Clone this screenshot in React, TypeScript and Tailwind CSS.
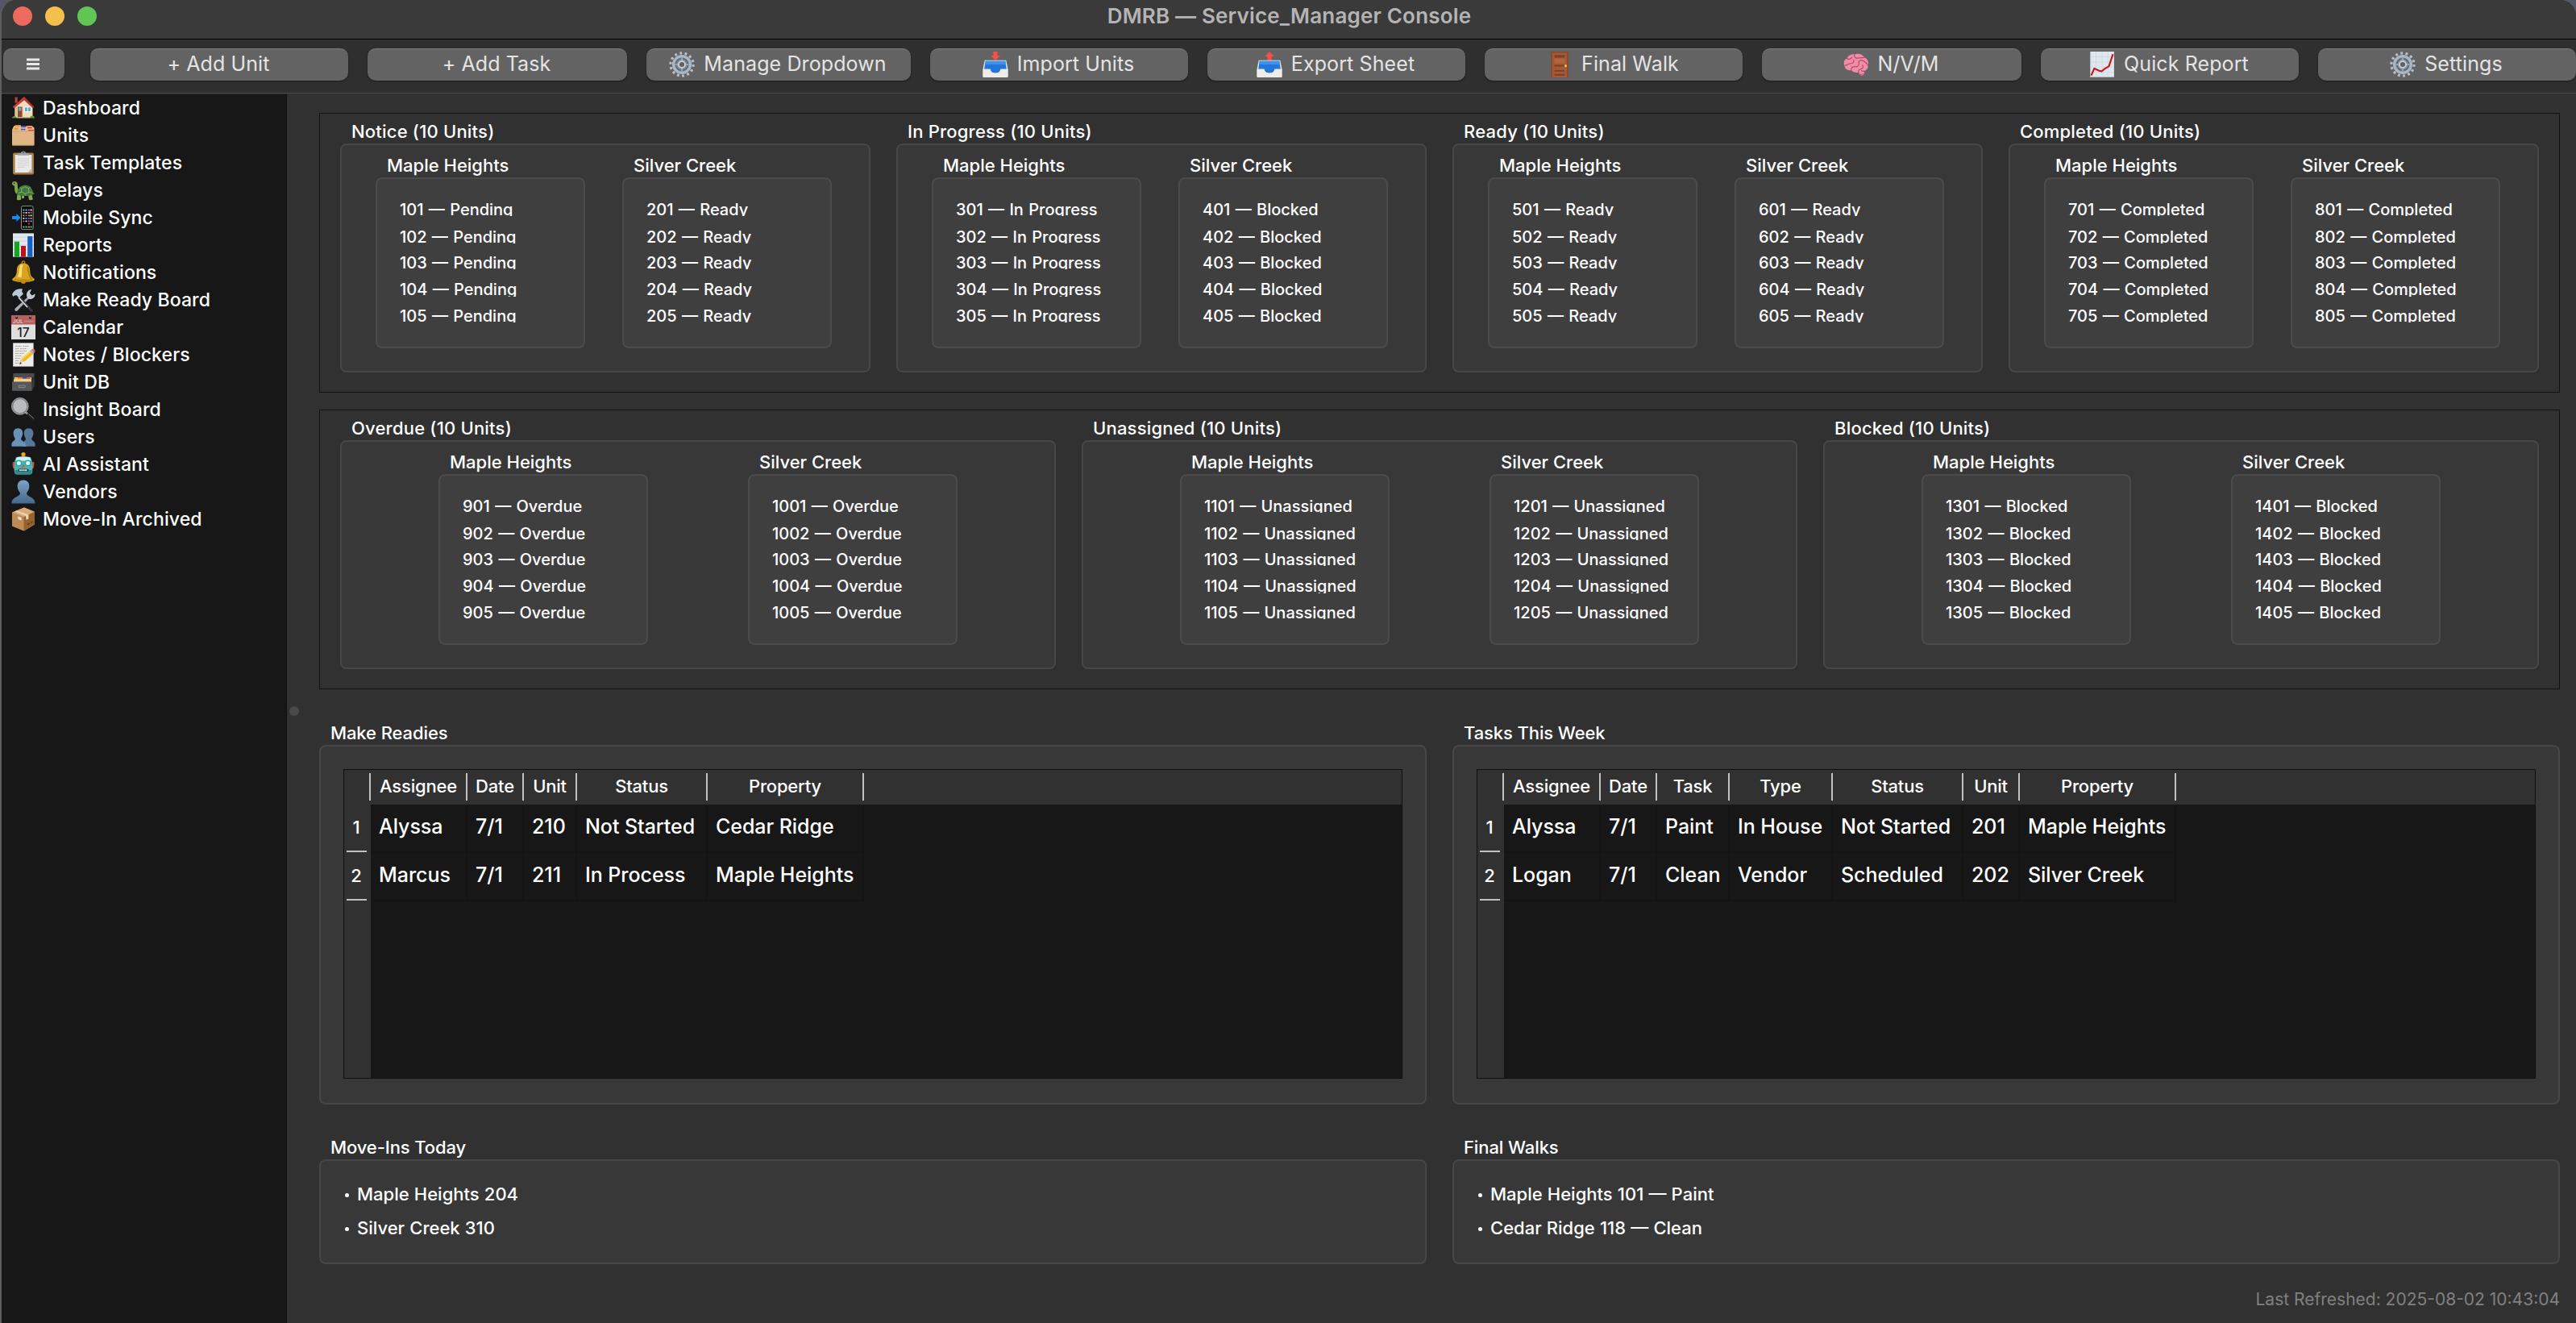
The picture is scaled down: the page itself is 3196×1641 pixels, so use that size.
import type { ReactNode } from "react";

/* ---------- icons (30 x 30 artboard) ---------- */

const art: Record<string, ReactNode> = {
  house: (
    <>
      <path d="M4.5 1.5h3.2v7H4.5z" fill="#b5423a" />
      <path d="M4.5 13 16 4l10.5 9v13.6h-22z" fill="#f0dcb8" />
      <path d="M4.5 13h3v13.6h-3z" fill="#d9bf94" />
      <path d="M16 .8 1.6 13.6l1.8 1.6L16 5.2l10.8 10 1.6-1.6z" fill="#b3312a" />
      <path d="M16 2.6 3 14" stroke="#d85a4c" strokeWidth="1" />
      <path d="M8 13.5h5.6v12.8H8z" fill="#8a4a2c" />
      <path d="M9 14.6h3.4v4H9z" fill="#6fa6c8" />
      <path d="M16 13.5h8.6v6.2H16z" fill="#fff" />
      <path d="M16.8 14.2h3v4.8h-3zM20.8 14.2h3v4.8h-3z" fill="#5fa5dc" />
      <path d="M1 27.6c0-3 4-4 5.6-.4zM23 27.6c0-4 6-4 6 0z" fill="#5f9a34" />
      <path d="M6.5 26h17v1.6h-17z" fill="#c9b48d" />
    </>
  ),
  files: (
    <>
      <path d="M3 3.5 6 2h5l1.5 1.5H19L20.5 3h5l3 2.5V10H1V8z" fill="#e2bd8b" />
      <path d="M5 2h5.5v1.8H5zM3.5 5.8h5v1.6h-5z" fill="#f08a24" />
      <path d="M12 3.4h6v1.6h-6zM12 6.8h5.5v1.5H12z" fill="#3a4fe0" />
      <path d="M20 4.6h5.5v1.7H20zM21 8h7v1.6h-7z" fill="#e8302c" />
      <rect x="1" y="9.6" width="27.6" height="18" rx="1" fill="#dfb684" />
      <path d="M1 9.8h27.6" stroke="#c99f6c" strokeWidth=".8" />
      <path d="M1.4 27.2h26.8" stroke="#b58a58" strokeWidth=".8" />
    </>
  ),
  clipboard: (
    <>
      <rect x="2" y="2.4" width="26" height="27" rx="2" fill="#a97c43" />
      <rect x="4.6" y="5" width="20.8" height="22" fill="#e9e9e9" />
      <path d="m25.4 22-5 5h5z" fill="#b9b9b9" />
      <path d="M8 10h14M8 12.6h14M8 15.2h14M8 17.8h14M8 20.4h9" stroke="#cfcfcf" strokeWidth="1" />
      <path d="M8.6 3h3.2c.4-3.4 6-3.4 6.4 0h3.2l1 2.8H7.6z" fill="#9aa2a8" />
      <circle cx="15" cy="2.2" r="1" fill="#4b4f52" />
    </>
  ),
  turtle: (
    <>
      <path d="M1 7c-.6-3.4 5.6-4.4 6.6-.4.6 3.4 0 6.4 1.4 9.4l-2.4 3.4C3.2 17.4 4.6 12 3.8 9.6 2.6 9.4 1.2 8.6 1 7z" fill="#7fa648" />
      <path d="M7.4 20h4.2l.6 6.6c-1.4 1-4.4 1-5.4 0zM21 20h4.4l1.4 6.2c-1.6 1.2-3.8 1.2-5 .4zM13 21h3v4h-3z" fill="#86aa4b" />
      <path d="m26 17 3 2.4-4 .6z" fill="#7fa648" />
      <path d="M7 20c.4-7 4.600-11.600 10.200-11.600S27.400 13 27.200 20.400c-6 2.200-14 2.400-20.200-.4z" fill="#3f7a3c" />
      <path d="m13 12.600 4-2 4.400 2 .6 4.400-4.600 2.400-4.800-2.200zM8.600 18.600l4-1.400M22 17l4.400 1.400M17.400 19.400v2M21.400 12.600l2.400-1.200M13 12.600l-2.200-1" stroke="#88b26a" strokeWidth=".9" fill="none" />
      <circle cx="3.600" cy="6.400" r=".8" fill="#222" />
    </>
  ),
  phone: (
    <>
      <rect x="12.500" y=".6" width="14.600" height="29" rx="1.800" fill="#060606" stroke="#8e8e8e" strokeWidth="1" />
      <path d="M14.400 4.600h2v1.800h-2zM21 11.400h2v1.800h-2zM14.400 25.600h2v2h-2zM23.600 25.600h2v2h-2z" fill="#5bd162" />
      <path d="M17.600 4.600h2v1.800h-2zM14.400 8h2v1.800h-2zM17.600 15h2v1.800h-2zM17.600 25.600h2v2h-2zM23.600 18.400h2v1.800h-2z" fill="#58b7ec" />
      <path d="M20.800 4.600h2v1.800h-2zM17.600 11.400h2v1.800h-2zM14.400 18.400h2v1.800h-2zM20.800 21.800h2v1.800h-2z" fill="#d94c7e" />
      <path d="M23.600 4.600h2v1.800h-2zM17.600 8h2v1.800h-2zM23.600 11.400h2v1.800h-2zM14.400 15h2v1.800h-2zM17.600 18.400h2v1.800h-2z" fill="#e9e9e9" />
      <path d="M20.800 8h2v1.800h-2zM14.400 11.400h2v1.800h-2zM23.600 15h2v1.800h-2zM20.800 25.600h2v2h-2z" fill="#f0a23a" />
      <path d="M20.800 15h2v1.800h-2zM23.600 8h2v1.800h-2zM20.800 18.400h2v1.800h-2z" fill="#c24be0" />
      <path d="M1 13h5.400v-3l5.200 5-5.200 5v-3H1z" fill="#1d86ef" />
    </>
  ),
  bars: (
    <>
      <rect x="2" y=".4" width="26" height="29.200" fill="#dfe7f0" />
      <path d="M2 5h26M2 10h26M2 15h26M2 20h26M2 25h26" stroke="#c2cdd9" strokeWidth=".6" />
      <path d="M3.800 10.600h6.200v19H3.800z" fill="#14a51c" />
      <path d="M12 16h6v13.600h-6z" fill="#bf1218" />
      <path d="M20.200 4h6.200v25.600h-6.200z" fill="#175fc0" />
    </>
  ),
  bell: (
    <>
      <circle cx="15" cy="2.800" r="1.900" fill="none" stroke="#c08a1a" strokeWidth="1.200" />
      <path d="M15 3.400c6 0 8 4 8.200 9.600.2 5 2 7.600 5 9.600.8.6.8 1.800 0 2.400-7 2.600-19.400 2.600-26.400 0-.8-.6-.8-1.800 0-2.400 3-2 4.800-4.600 5-9.600C7 7.400 9 3.400 15 3.400z" fill="#d9a31c" />
      <path d="M11.600 5.600c-2 3-1.400 9.600-3.600 14.600 1.800.6 3 .8 4.600.8.800-5 .2-11 1.800-16z" fill="#f8e07a" />
      <path d="M20 8c1.600 5 1 10 5 15" stroke="#a87410" strokeWidth="1.400" fill="none" />
      <path d="M4 23.400c6 2 16 2 22 0" stroke="#9a6a10" strokeWidth="1" fill="none" />
      <circle cx="15" cy="26" r="3" fill="#c48614" />
    </>
  ),
  tools: (
    <>
      <path d="m22 10 1.600 1.600L7.400 28.600c-1.400 1.200-4-.8-2.800-2.800z" fill="#a9adb3" />
      <path d="M10.500 10 26.600 27.400c1 1.400-1 3-2.200 2L7.600 12.400z" fill="#39393b" />
      <path d="M19.600 11.600c-2-4.400 1-9.200 5.400-9.600l-2 4.600 2.600 3 4-2c.4 4.600-4.600 7.800-8.400 6z" fill="#c6cdd6" />
      <path d="M1 8.600C2.800 3.200 8 .4 14 1.600L13 4.400l2 3-5.400 5-3-3.200-2.800.2-1 1.600z" fill="#bcc8d6" />
      <path d="M9.400 12.200 20 24" stroke="#d9dde2" strokeWidth="1.600" />
    </>
  ),
  calendar: (
    <>
      <rect width="30" height="30" fill="#dedede" />
      <rect width="30" height="11.500" fill="#b4605f" />
      <circle cx="6.600" cy="3" r="1.500" fill="#2b1414" />
      <circle cx="23.400" cy="3" r="1.500" fill="#2b1414" />
      <path d="M6.600 0v3M23.400 0v3" stroke="#9a9a9a" strokeWidth=".8" />
      <text x="1.800" y="10.200" fontSize="6.800" fontWeight="700" fill="#e2b9b8">JUL</text>
      <path d="M16 7.600h12" stroke="#c07a78" strokeWidth="2.400" />
      <text x="15" y="26.600" fontSize="15.500" textAnchor="middle" fill="#1b1b1b">17</text>
    </>
  ),
  memo: (
    <>
      <rect x="2.200" y=".4" width="25.400" height="29.200" fill="#ececea" />
      <path d="M5 4.400h8m1.500 0h7M5 7.400h5m1.200 0h8M5 10.400h9m1 0h4M5 13.400h4m1 0h6M5 16.400h8M5 19.400h6M5 22.400h4M5 25.400h4" stroke="#8f8f8f" strokeWidth=".9" strokeDasharray="1.800 .7" />
      <path d="m10.400 24.800 1.800-5 11-9.600 3.600 4-11 9.600z" fill="#f2b81f" />
      <path d="m12.200 19.800 11-9.600 1.300 1.400-11 9.700z" fill="#fbd95c" />
      <path d="m10.400 24.800 1.800-5 3.600 4z" fill="#e8cfa4" />
      <path d="m10.200 27 .8-3 2 2z" fill="#3a3a3a" />
      <path d="m23.200 10.200 1.600-1.400 3.600 4-1.600 1.400z" fill="#9fb2c0" />
      <path d="m24.800 8.800 1.400-.9c2-.6 4 1.800 3 3.600l-.8 1.300z" fill="#e06a72" />
    </>
  ),
  drawer: (
    <>
      <path d="M2.400 4.600h24l2.400-.6v15l-3.600 6.600H1.600V10z" fill="#2f3032" />
      <path d="M2.400 4h26v4l-3 1.600H2.400z" fill="#4a4c4f" />
      <path d="M4 9h21v6H3z" fill="#f0bd5c" />
      <path d="M8 9h6v1.800H8z" fill="#ef7f2d" />
      <path d="M14 9h5v1.800h-5z" fill="#2f54c8" />
      <path d="M19 9.400h5v1.400h-5z" fill="#d63a36" />
      <path d="M3.400 11.200h21.200V15H3z" fill="#f6d184" />
      <path d="M1 14.400h24.600v11.400H1z" fill="#56585c" />
      <path d="m25.600 14.400 3-4.400v10l-3 5.800z" fill="#37383b" />
      <path d="M9.500 19h7.600v2.600H9.500z" fill="none" stroke="#8d8f94" strokeWidth=".9" />
    </>
  ),
  lens: (
    <>
      <path d="m17.600 19.200 2-2 9.400 8.200c1.200 1.400-1.400 4.200-3 3z" fill="#1f1f21" />
      <path d="m21.400 20.400 6.600 6" stroke="#7c7c80" strokeWidth="1" />
      <path d="m16.600 17.600 3.600 2.600" stroke="#8f9295" strokeWidth="2.600" />
      <circle cx="10.800" cy="10.800" r="9.500" fill="#b9bcbe" stroke="#7e8285" strokeWidth="2" />
      <circle cx="10.800" cy="10.800" r="10.400" fill="none" stroke="#c5c9cb" strokeWidth=".6" />
    </>
  ),
  people: (
    <>
      <path d="M21.600 4.200c4 0 6 2.800 5.800 6.600-.2 2.800-1.400 4.400-2.200 6.400.2 3 4.400 2.800 4.400 7v2.600H14V24c0-4 4-4 4-6.800-1-2-2-3.600-2.200-6.400-.2-3.800 1.800-6.600 5.800-6.600z" fill="#56789c" />
      <path d="M8.400 4.200c4 0 6 2.800 5.800 6.600-.2 2.800-1.400 4.400-2.200 6.400.2 3 5.600 2.800 6.600 9.600H.4v-2.600c0-4.200 4.200-4 4.400-7-1-2-2-3.600-2.200-6.400C2.400 7 4.400 4.200 8.400 4.200z" fill="#6a92b8" />
    </>
  ),
  robot: (
    <>
      <path d="M15 3v4" stroke="#4a2a6c" strokeWidth="3" />
      <circle cx="15" cy="2.600" r="2.600" fill="#f0a51e" />
      <path d="M2 12h3v8H3c-1.600 0-1.600-8-1-8zM28 12h-3v8h2c1.600 0 1.600-8 1-8z" fill="#e0412f" />
      <path d="M6 6.200c5-1.400 13-1.400 18 0 2.600 5 3 12 2 19-.3 1.600-1.400 2.200-3 2.200H7c-1.600 0-2.700-.6-3-2.200-1-7-.6-14 2-19z" fill="#52b0ae" />
      <path d="M6.600 6.600c5-1.400 11.800-1.400 16.800 0l1 4H5.600z" fill="#d6f2ee" />
      <path d="M4.300 22h21.400l-.4 3.600c-.3 1.200-1.200 1.800-2.600 1.800H7.300c-1.400 0-2.300-.6-2.600-1.800z" fill="#2e8b8c" />
      <circle cx="9.300" cy="13.400" r="4" fill="#12aebc" />
      <circle cx="20.700" cy="13.400" r="4" fill="#12aebc" />
      <circle cx="9.300" cy="13.400" r="2.500" fill="#f4ffff" />
      <circle cx="20.700" cy="13.400" r="2.500" fill="#f4ffff" />
      <path d="m15 14.600 2.200 4h-4.400z" fill="#e0503a" />
      <rect x="8.600" y="20.400" width="12.800" height="3.600" rx="1.600" fill="#16393b" />
      <path d="M10 22.200h10" stroke="#f4f4f4" strokeWidth="2" strokeDasharray="1.800 .6" />
    </>
  ),
  person: (
    <>
      <defs>
        <linearGradient id="person" x1="0" y1="0" x2="0" y2="1">
          <stop offset="0" stopColor="#7ba3c8" />
          <stop offset="1" stopColor="#47688a" />
        </linearGradient>
      </defs>
      <path d="M15 .4c5.400 0 7.600 3.600 7.300 8.400-.2 3.600-2 5.600-3.300 8 .4 5.200 10.400 3.800 10.600 12.800H.4C.6 20.600 10.600 22 11 16.800c-1.300-2.400-3.100-4.400-3.300-8C7.400 4 9.600.4 15 .4z" fill="url(#person)" />
    </>
  ),
  box: (
    <>
      <path d="m1 6.600 15-6 13 5.200v15.800l-13 8L1 23.400z" fill="#b07a45" />
      <path d="m1 6.600 15-6 13 5.200-13.400 6.400z" fill="#d9ab78" />
      <path d="m1 6.600 14.600 5.600v17.400L1 23.400z" fill="#c08a54" />
      <path d="M15.600 12.200 29 5.800v15.800l-13.400 8z" fill="#96632f" />
      <path d="m6.800 4.300 14.600 5.200v5l-3 1.200-.4-4.600L4.600 5.200z" fill="#e8d3b4" />
      <path d="m8.400 11.400 4.200 1.600v3.600l-4.200-1.600z" fill="#e9e4da" />
      <path d="m20 21.600 2.600-1.400M24 19.600l2.400-1.400" stroke="#5b3a18" strokeWidth="1.400" />
    </>
  ),
  gear: (
    <>
      <circle cx="15" cy="15" r="13.200" fill="none" stroke="#b4c0cb" strokeWidth="3" strokeDasharray="2.700 3.223" />
      <circle cx="15" cy="15" r="9.800" fill="#7d8993" stroke="#a9b7c4" strokeWidth="3" />
      <circle cx="15" cy="15" r="7" fill="none" stroke="#5b666f" strokeWidth="1.200" />
      <path d="M15 7v5M15 18v5M7 15h5M18 15h5" stroke="#96a3ae" strokeWidth="2" />
      <circle cx="15" cy="15" r="3.800" fill="#5e5f61" stroke="#c3ced8" strokeWidth="1.900" />
    </>
  ),
  inbox: (
    <>
      <path d="M12.600 0h4.800v4.600h3.200L15 10.200 9.400 4.600h3.200z" fill="#f4514a" />
      <Tray />
    </>
  ),
  outbox: (
    <>
      <path d="M12.600 10.200h4.800V5.600h3.200L15 0 9.400 5.600h3.200z" fill="#f4514a" />
      <Tray />
    </>
  ),
  door: (
    <>
      <rect x="5" y="0" width="20" height="30" fill="#8d4a2b" />
      <rect x="6.600" y="1.600" width="16.800" height="28.400" fill="#a35a38" />
      <path d="M9 4h12v3H9zM9 15.400h12v2H9zM9 21.500h12v1.800H9zM9 26h12v2H9z" fill="#7c3f23" />
      <path d="M9 8h12v5.600H9z" fill="#b0643f" />
      <circle cx="22" cy="16.600" r="1.500" fill="#f2c230" />
    </>
  ),
  brain: (
    <>
      <path d="M13 3.200C17 1.600 22 3 24.600 6.600c3.400 1.800 5.400 6 4.200 9.600.2 3-1.800 5.800-4.600 6.400.8 2.400-.4 5.200-2.600 5.200-2.200.2-3.400-2-3.800-3.600-4 .6-7-.4-8.600-2.600-3.600.8-7-1-7.600-4.200C-.2 13.600.6 9.400 4 8c1.400-3 5-5.400 9-4.800z" fill="#f08ea8" />
      <path d="M4 8c2 1.600 5 .8 6-1.400M13 3.200c-1 3.600 2 5 5 4.200s5 .4 6.600-.8M2 16c3 .4 4.400-2.400 7-2.200s3.600-2.600 3-4.200M9.200 21.600c-.4-3 2-4.400 4.600-4s5-1.600 4.200-4.400 3-4.200 5.600-2.200 4 2.400 5.200 5.200M17.800 24.200c-.6-2.600 1-4 3.200-4.200s2.400-3 .8-4.400M24.200 22.600c-1 .8-2.200.2-3.200-.6" fill="none" stroke="#b54668" strokeWidth="1.100" strokeLinecap="round" />
      <path d="M19.400 25.200c.6 2.400 3 2.400 3.800 0" fill="none" stroke="#c4506f" strokeWidth="1" />
    </>
  ),
  trend: (
    <>
      <rect x="1" y="0" width="28" height="30" fill="#dfe7ef" />
      <path d="M1.500 0v30M1 29.500h28" stroke="#aab8c6" strokeWidth="1" />
      <path d="M1 6h28M1 12h28M1 18h28M1 24h28M8 0v30M15 0v30M22 0v30" stroke="#c9d4df" strokeWidth=".5" />
      <path d="M2.400 27.600 6 19.600l5 2.400 3.400 1L18 20l5-3 4.600-14" fill="none" stroke="#cc1418" strokeWidth="2" strokeLinejoin="round" />
    </>
  ),
};

function Tray() {
  return (
    <>
      <path d="M2.500 10h25l2 10.500V29H.5v-8.500z" fill="#eceae6" />
      <path d="M3.400 11h23.200l1.400 9.500h-7c-.6 3.400-2.400 4.600-6 4.600s-5.400-1.200-6-4.600H2z" fill="#2477d8" />
      <path d="M3.400 11h23.200l.6 4H2.800z" fill="#3f92ec" />
      <path d="M.5 20.500H9c.6 3.400 2.400 4.600 6 4.600s5.400-1.200 6-4.600h8.500V30H.5z" fill="#efedea" />
    </>
  );
}

function Icon({ name, size }: { name: string; size: number }) {
  return (
    <svg width={size} height={size} viewBox="0 0 30 30" className="shrink-0">
      {art[name]}
    </svg>
  );
}

/* ---------- data ---------- */

const toolbar = [
  { label: "+ Add Unit", width: "w-[320px]" },
  { label: "+ Add Task", width: "w-[322px]" },
  { label: "Manage Dropdown", icon: "gear", width: "w-[328px]" },
  { label: "Import Units", icon: "inbox", width: "w-[320px]" },
  { label: "Export Sheet", icon: "outbox", width: "w-[320px]" },
  { label: "Final Walk", icon: "door", width: "w-[320px]" },
  { label: "N/V/M", icon: "brain", width: "w-[322px]" },
  { label: "Quick Report", icon: "trend", width: "w-[320px]" },
  { label: "Settings", icon: "gear", width: "w-[320px]" },
];

const nav = [
  ["house", "Dashboard"],
  ["files", "Units"],
  ["clipboard", "Task Templates"],
  ["turtle", "Delays"],
  ["phone", "Mobile Sync"],
  ["bars", "Reports"],
  ["bell", "Notifications"],
  ["tools", "Make Ready Board"],
  ["calendar", "Calendar"],
  ["memo", "Notes / Blockers"],
  ["drawer", "Unit DB"],
  ["lens", "Insight Board"],
  ["people", "Users"],
  ["robot", "AI Assistant"],
  ["person", "Vendors"],
  ["box", "Move-In Archived"],
];

type Group = { title: string; first: number; a: string; b: string };

const topGroups: Group[] = [
  { title: "Notice", first: 1, a: "Pending", b: "Ready" },
  { title: "In Progress", first: 3, a: "In Progress", b: "Blocked" },
  { title: "Ready", first: 5, a: "Ready", b: "Ready" },
  { title: "Completed", first: 7, a: "Completed", b: "Completed" },
];

const lowerGroups: Group[] = [
  { title: "Overdue", first: 9, a: "Overdue", b: "Overdue" },
  { title: "Unassigned", first: 11, a: "Unassigned", b: "Unassigned" },
  { title: "Blocked", first: 13, a: "Blocked", b: "Blocked" },
];

const makeReadies = {
  columns: [
    ["Assignee", "w-[120px]"],
    ["Date", "w-[70px]"],
    ["Unit", "w-[66px]"],
    ["Status", "w-[162px]"],
    ["Property", "w-[194px]"],
  ],
  rows: [
    ["Alyssa", "7/1", "210", "Not Started", "Cedar Ridge"],
    ["Marcus", "7/1", "211", "In Process", "Maple Heights"],
  ],
};

const tasks = {
  columns: [
    ["Assignee", "w-[120px]"],
    ["Date", "w-[70px]"],
    ["Task", "w-[90px]"],
    ["Type", "w-[128px]"],
    ["Status", "w-[162px]"],
    ["Unit", "w-[70px]"],
    ["Property", "w-[194px]"],
  ],
  rows: [
    ["Alyssa", "7/1", "Paint", "In House", "Not Started", "201", "Maple Heights"],
    ["Logan", "7/1", "Clean", "Vendor", "Scheduled", "202", "Silver Creek"],
  ],
};

/* ---------- pieces ---------- */

// Each list row clips its descenders; the clip depth alternates slightly.
const rowSpacing = [
  "mt-[24px] leading-[28px]",
  "mt-[12px] leading-[28px]",
  "mt-[10px] leading-[29px]",
  "mt-[12px] leading-[27px]",
  "mt-[10px] leading-[29px]",
];

function PropertyBox({ name, block, status }: { name: string; block: number; status: string }) {
  return (
    <div className="w-[260px]">
      <div className="flex h-[29px] items-center pl-[14px]">{name}</div>
      <div className="h-[212px] rounded-lg border-2 border-[#4b4b4b] bg-[#3f3f3f] pl-[28px] text-[20px]">
        {rowSpacing.map((cls, i) => (
          <div key={i} className={`h-[22px] overflow-hidden whitespace-pre [word-spacing:1px] ${cls}`}>
            {`${block * 100 + i + 1} — ${status}`}
          </div>
        ))}
      </div>
    </div>
  );
}

function GroupFrame({ groups, cols, inner }: { groups: Group[]; cols: string; inner: string }) {
  return (
    <section className={`grid gap-8 border border-[#121212] px-[25px] pt-[7px] pb-[24px] ${cols}`}>
      {groups.map((g) => (
        <div key={g.title}>
          <div className="flex h-[30px] items-center pl-[14px] tracking-[0.2px]">{g.title} (10 Units)</div>
          <div className={`flex h-[284px] rounded-lg border-2 border-[#474747] bg-[#383838] pt-[11px] ${inner}`}>
            <PropertyBox name="Maple Heights" block={g.first} status={g.a} />
            <PropertyBox name="Silver Creek" block={g.first + 1} status={g.b} />
          </div>
        </div>
      ))}
    </section>
  );
}

function Panel({ title, children, className }: { title: string; children: ReactNode; className: string }) {
  return (
    <section>
      <div className="flex h-[30px] items-center pl-[14px] tracking-[-0.1px]">{title}</div>
      <div className={`rounded-lg border-2 border-[#474747] bg-[#383838] ${className}`}>{children}</div>
    </section>
  );
}

function DataTable({ columns, rows }: { columns: string[][]; rows: string[][] }) {
  return (
    <div className="flex h-[384px] flex-col border border-[#101010] bg-[#171717]">
      <div className="flex h-[43px] shrink-0 bg-[#313131] pt-[4px]">
        <div className="h-[34px] w-[33px] border-r-2 border-[#c0c0c0]" />
        {columns.map(([label, width]) => (
          <div
            key={label}
            className={`flex h-[34px] items-center justify-center border-r-2 border-[#c0c0c0] pb-[2px] tracking-[-0.2px] ${width}`}
          >
            {label}
          </div>
        ))}
      </div>
      <div className="flex flex-1">
        <div className="flex w-[33px] flex-col bg-[#313131] pl-[3px]">
          {rows.map((_, i) => (
            <div key={i} className="mb-px flex h-[59px] w-[25px] items-center justify-center border-b-2 border-[#c0c0c0] pr-px pb-px">
              {i + 1}
            </div>
          ))}
        </div>
        <div>
          {rows.map((row, r) => (
            <div key={r} className="flex h-[60px] text-[25px] tracking-[-0.05px]">
              {row.map((cell, c) => (
                <div
                  key={c}
                  className={`flex items-center border-r-2 border-b-2 border-[#141414] pb-[3px] pl-[10px] whitespace-nowrap ${columns[c][1]}`}
                >
                  {cell}
                </div>
              ))}
            </div>
          ))}
        </div>
      </div>
    </div>
  );
}

function BulletList({ items }: { items: string[] }) {
  return (
    <ul>
      {items.map((item) => (
        <li key={item} className="flex h-[42px] items-center [word-spacing:0.3px]">
          <span className="mt-[2px] mr-[10px] size-[5px] rounded-full bg-white" />
          {item}
        </li>
      ))}
    </ul>
  );
}

const buttonStyle =
  "flex h-10 shrink-0 items-center justify-center gap-[11px] rounded-[10px] border-t border-[#7d7d7d] bg-[#636363] pr-[2px] pb-[2px] shadow-[0_1px_2px_rgba(0,0,0,0.45)]";

/* ---------- page ---------- */

export default function App() {
  return (
    <div className="h-[1641px] w-[3196px] overflow-hidden bg-[#55556a]">
      <div className="flex h-full flex-col overflow-hidden rounded-t-[20px] border-l-2 border-[#5e5e5e] bg-[#313131] font-['Inter',sans-serif] text-[22px] font-medium text-white">
        <header className="flex h-[49px] shrink-0 items-center border-b border-black bg-[#3a3a3a] pb-[8px]">
          <div className="flex w-[400px] gap-4 pl-[14px]">
            <span className="size-6 rounded-full bg-[#ed6a5f]" />
            <span className="size-6 rounded-full bg-[#f5bf4f]" />
            <span className="size-6 rounded-full bg-[#61c554]" />
          </div>
          <h1 className="mr-[399px] flex-1 pb-px text-center text-[26px] leading-[30px] font-semibold tracking-[0.18px] text-[#b4b4b4]">
            DMRB — Service_Manager Console
          </h1>
        </header>

        <nav className="flex h-[67px] shrink-0 gap-6 border-b border-[#4c4c4c] bg-[#2f2f2f] pt-[11px] pl-[2px] text-[25px] font-normal tracking-[0.1px] text-[#e4e4e4]">
          <button className={`mr-2 w-[76px] ${buttonStyle}`}>
            <svg width="16" height="15" viewBox="0 0 16 15">
              <path d="M0 2h16M0 7.500h16M0 13h16" stroke="#e8e8e8" strokeWidth="2.800" />
            </svg>
          </button>
          {toolbar.map((b) => (
            <button key={b.label} className={`${b.width} ${buttonStyle}`}>
              {b.icon && <Icon name={b.icon} size={32} />}
              {b.label}
            </button>
          ))}
        </nav>

        <div className="flex flex-1">
          <aside className="w-[354px] border-t border-r border-t-[#2b2b2b] border-r-[#101010] bg-[#171717] text-[23px] tracking-[0.12px]">
            {nav.map(([icon, label]) => (
              <div key={label} className="flex h-[34px] items-center gap-[9px] pl-[12px]">
                <Icon name={icon} size={30} />
                {label}
              </div>
            ))}
          </aside>

          <div className="flex w-[18px] items-center pt-[6px] pl-[3px]">
            <span className="size-3 rounded-full bg-[#4a4a4a]" />
          </div>

          <main className="flex flex-1 flex-col pt-[24px] pr-[20px] pl-[22px]">
            <GroupFrame groups={topGroups} cols="grid-cols-4" inner="pl-[42px] gap-[46px]" />
            <div className="h-[21px]" />
            <GroupFrame groups={lowerGroups} cols="grid-cols-3" inner="pl-[120px] gap-[124px]" />

            <div className="mt-[39px] grid grid-cols-2 gap-x-8 gap-y-[38px]">
              <Panel title="Make Readies" className="h-[446px] px-[28px] pt-[28px]">
                <DataTable {...makeReadies} />
              </Panel>
              <Panel title="Tasks This Week" className="h-[446px] px-[28px] pt-[28px]">
                <DataTable {...tasks} />
              </Panel>
              <Panel title="Move-Ins Today" className="h-[130px] pt-[20px] pl-[30px]">
                <BulletList items={["Maple Heights 204", "Silver Creek 310"]} />
              </Panel>
              <Panel title="Final Walks" className="h-[130px] pt-[20px] pl-[30px]">
                <BulletList items={["Maple Heights 101 — Paint", "Cedar Ridge 118 — Clean"]} />
              </Panel>
            </div>

            <footer className="mt-[28px] text-right text-[21px] leading-[32px] font-normal text-[#808080]">
              Last Refreshed: 2025-08-02 10:43:04
            </footer>
          </main>
        </div>
      </div>
    </div>
  );
}
